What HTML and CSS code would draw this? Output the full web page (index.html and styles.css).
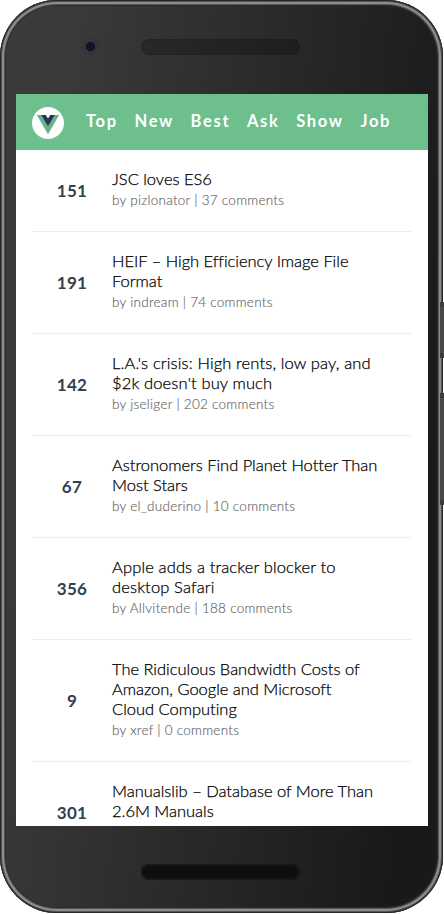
FILE: index.html
```
<!DOCTYPE html>
<html lang="en">
<head>
<meta charset="utf-8">
<title>Vue HN</title>
<link rel="stylesheet" href="styles.css">
</head>
<body>
<div class="phone">
  <div class="face">
    <div class="top"><i class="camera"></i><i class="speaker"></i></div>
    <main class="screen">
      <header class="header">
        <svg class="logo" viewBox="0 0 32 32"><circle cx="16" cy="16" r="16" fill="#fff"/><path d="M4.800 8h5.200L16 18.500 22 8h5.200L16 27.300z" fill="#64b587"/><path d="M9.200 8h4.500l2.300 3.600L18.300 8h4.500L16 19.300z" fill="#2c3454"/></svg>
        <nav class="nav"><a>Top</a><a>New</a><a>Best</a><a>Ask</a><a>Show</a><a>Job</a></nav>
      </header>
      <ul class="list">
        <li class="item"><b class="score">151</b><div class="body"><h2>JSC loves ES6</h2><p>by pizlonator | 37 comments</p></div></li>
        <li class="item"><b class="score">191</b><div class="body"><h2>HEIF – High Efficiency Image File<br>Format</h2><p>by indream | 74 comments</p></div></li>
        <li class="item"><b class="score">142</b><div class="body"><h2 class="wide">L.A.'s crisis: High rents, low pay, and<br>$2k doesn't buy much</h2><p>by jseliger | 202 comments</p></div></li>
        <li class="item"><b class="score">67</b><div class="body"><h2>Astronomers Find Planet Hotter Than<br>Most Stars</h2><p>by el_duderino | 10 comments</p></div></li>
        <li class="item"><b class="score">356</b><div class="body"><h2 class="wide">Apple adds a tracker blocker to<br>desktop Safari</h2><p>by Allvitende | 188 comments</p></div></li>
        <li class="item"><b class="score">9</b><div class="body"><h2>The Ridiculous Bandwidth Costs of<br>Amazon, Google and Microsoft<br>Cloud Computing</h2><p>by xref | 0 comments</p></div></li>
        <li class="item"><b class="score">301</b><div class="body last"><h2>Manualslib – Database of More Than<br>2.6M Manuals</h2></div></li>
      </ul>
    </main>
    <div class="bottom"><i class="speaker low"></i></div>
  </div>
  <i class="key power"></i><i class="key volume"></i>
</div>
</body>
</html>
```
FILE: styles.css
```
* { box-sizing: border-box; margin: 0; padding: 0; }
body { background: #fff; font-family: Lato, "Liberation Sans", sans-serif; overflow: hidden; }
.phone { position: relative; width: 443px; height: 913px; padding: 6px; border-radius: 57px; background: #333;
  box-shadow: inset 0 0 0 1px #252525, inset 0 0 0 2px #555, inset 0 0 0 4px #8c8c8c, inset 0 0 0 5px #555, inset 0 0 0 6px #2b2b2b; }
.face { height: 901px; padding: 0 9px 0 10px; border-radius: 51px; background: linear-gradient(97deg, #3b3b3b 10%, #191919 90%); }
.top { height: 88px; padding: 33px 0 0 66px; display: flex; gap: 42px; }
.camera { width: 17px; height: 17px; margin-top: -1px; border-radius: 50%; background: radial-gradient(circle, #191026 4.5px, #363434 5px); }
.speaker { width: 159px; height: 16px; border-radius: 8px; background: rgba(0,0,0,.22); box-shadow: inset 0 0 0 2px rgba(0,0,0,.08); }
.screen { height: 732px; width: 412px; background: #fff; overflow: hidden; }
.header { height: 56px; background: #6dbf8e; display: flex; padding: 13px 16px; }
.logo { width: 32px; height: 32px; }
.nav { display: flex; gap: 16.6px; margin-left: 22px; color: #fff; font-size: 16.5px; font-weight: 700; line-height: 28px; letter-spacing: 1.7px; white-space: nowrap; }
.list { list-style: none; padding: 0 16px; }
.item { display: flex; align-items: center; border-bottom: 1px solid #eee; padding: 20px 0; }
.score { width: 80px; text-align: center; font-size: 17px; font-weight: 700; letter-spacing: .3px; color: #2f4153; }
.body { white-space: nowrap; }
.last { height: 61px; }
h2 { position: relative; top: -1px; font-size: 16.5px; font-weight: 300; line-height: 20px; letter-spacing: -.02px; color: #000; font-variant-ligatures: none; -webkit-text-stroke: .25px #000; }
.wide { letter-spacing: .14px; }
p { font-size: 13.5px; font-weight: 300; line-height: 21px; letter-spacing: .27px; color: #666; -webkit-text-stroke: .15px #666; }
.bottom { padding: 38px 0 0 125px; }
.low { display: block; background: #0e0e0e; box-shadow: inset 0 0 0 2px #171717; }
.key { position: absolute; right: -1px; width: 4px; background: #484848; border: solid #3c3c3c; border-width: 5px 0; }
.power { top: 302px; height: 56px; }
.volume { top: 393px; height: 112px; }
```
